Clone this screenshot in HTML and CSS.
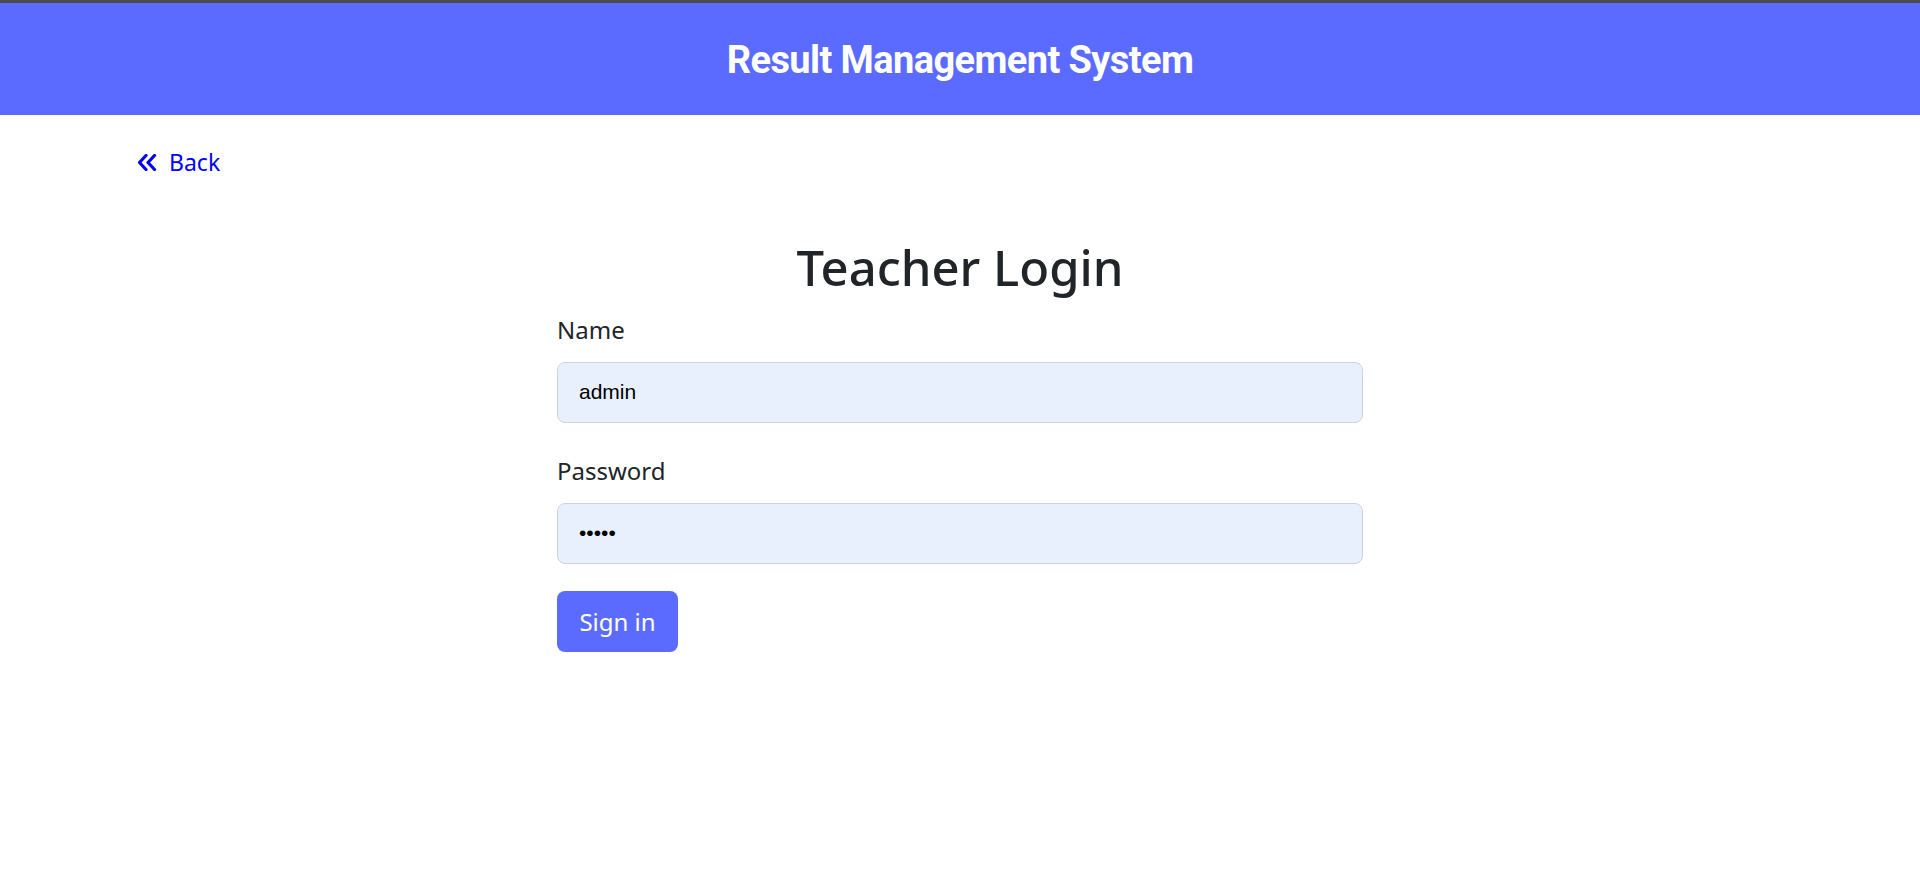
FILE: index.html
```html
<!DOCTYPE html>
<html lang="en">
<head>
<meta charset="utf-8">
<title>Teacher Login</title>
<link rel="stylesheet" href="styles.css">
</head>
<body>
<header class="topbar">
  <h1 class="brand">Result Management System</h1>
</header>
<div class="container">
  <a class="back" href="#">
    <svg class="back-icon" width="20" height="17" viewBox="0 0 20 17" aria-hidden="true">
      <polyline points="9,1.5 2.5,8.5 9,15.5" />
      <polyline points="17.5,1.5 11,8.5 17.5,15.5" />
    </svg>
    <span>Back</span>
  </a>
  <form class="login">
    <h2 class="title">Teacher Login</h2>
    <div class="field">
      <label class="label" for="name">Name</label>
      <input class="input" id="name" type="text" value="admin">
    </div>
    <div class="field">
      <label class="label" for="pw">Password</label>
      <input class="input" id="pw" type="password" value="admin">
    </div>
    <button class="btn" type="button">Sign in</button>
  </form>
</div>
</body>
</html>
```
FILE: styles.css
```css
* { box-sizing: border-box; }
html, body { margin: 0; padding: 0; }
body {
  font-family: "Noto Sans", "Open Sans", sans-serif;
  color: #212529;
  background: #ffffff;
}
.topbar {
  height: 115px;
  background: #5c6bff;
  border-top: 3px solid #4b4b4b;
  display: flex;
  align-items: center;
  justify-content: center;
}
.brand {
  margin: 0;
  color: #ffffff;
  font-family: Roboto, "Liberation Sans", sans-serif;
  font-weight: 700;
  font-size: 38px;
  letter-spacing: -0.6px;
  line-height: 1;
  padding-top: 2px;
}
.container {
  max-width: 1646px;
  margin: 0 auto;
}
.back {
  display: inline-flex;
  align-items: center;
  gap: 12px;
  margin-top: 34px;
  color: #0000ff;
  text-decoration: none;
  font-size: 23px;
  line-height: 26px;
}
.back-icon polyline {
  fill: none;
  stroke: #0000ff;
  stroke-width: 3.2;
  stroke-linecap: round;
  stroke-linejoin: round;
}
.login {
  width: 806px;
  margin: 61px auto 0;
  display: flex;
  flex-direction: column;
}
.title {
  margin: 0 0 15px;
  text-align: center;
  font-size: 49px;
  font-weight: 500;
  line-height: 60px;
}
.field {
  display: flex;
  flex-direction: column;
  margin-bottom: 30px;
}
.label {
  font-size: 24px;
  line-height: 36px;
  margin-bottom: 14px;
}
.input {
  height: 61px;
  border: 1px solid #ced4da;
  border-radius: 8px;
  background: #e8f0fe;
  padding: 0 21px;
  font-family: "Liberation Sans", Arial, sans-serif;
  font-size: 21px;
  color: #000000;
}
.btn {
  align-self: flex-start;
  width: 121px;
  height: 61px;
  border: none;
  border-radius: 8px;
  background: #5c6bff;
  color: #ffffff;
  font-family: "Noto Sans", "Open Sans", sans-serif;
  font-size: 24px;
  padding: 0;
  margin-top: -3px;
}
```
